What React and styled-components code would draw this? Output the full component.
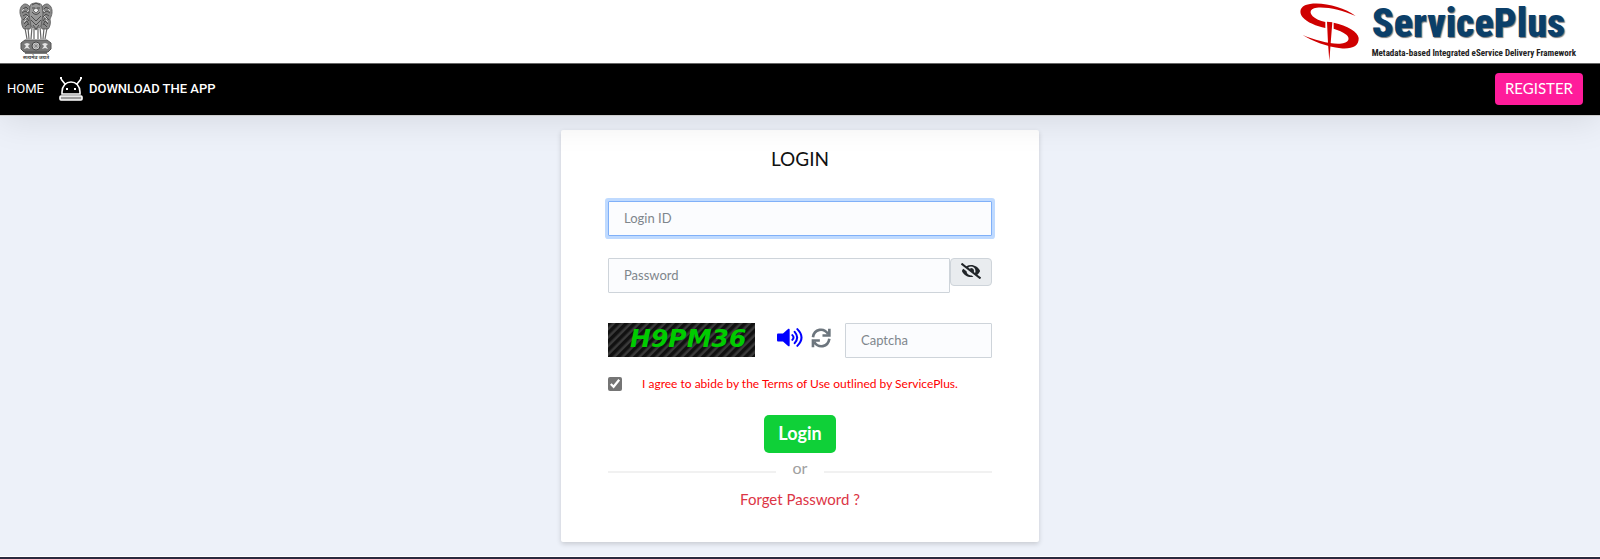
import styled, { createGlobalStyle } from "styled-components"
import { FaEyeSlash } from "react-icons/fa"

const GlobalStyle = createGlobalStyle`
  * {
    box-sizing: border-box;
  }

  body {
    margin: 0;
    background-color: #EDF1F9;
    color: #212529;
    font-family: Lato, "Open Sans", sans-serif;
    font-size: 16px;
    line-height: 24px;
  }

  button, input {
    font-family: inherit;
  }
`

const Header = styled.header`
  position: relative;
  z-index: 2;
  display: flex;
  justify-content: space-between;
  align-items: flex-start;
  height: 63px;
  padding: 2px 24px 2px 18px;
  background-color: #FFF;
`

const Brand = styled.a`
  display: flex;
  gap: 12px;
  color: #0B3F69;
  text-decoration: none;
`

const BrandName = styled.span`
  display: block;
  font-family: "Roboto Condensed", Roboto, sans-serif;
  font-size: 40px;
  font-weight: 900;
  line-height: 44px;
  text-shadow: 1px 1px 1px #777;
`

const BrandLine = styled.span`
  display: block;
  color: #222;
  font-family: "Roboto Condensed", Roboto, sans-serif;
  font-size: 9px;
  font-weight: bold;
  line-height: 14px;
`

const Nav = styled.nav`
  position: relative;
  display: flex;
  align-items: center;
  gap: 15px;
  height: 53px;
  padding: 0 17px 2px 7px;
  background-color: #000;
  border-top: 1px solid #666;
  border-bottom: 1px solid #CCC;
  box-shadow: 0 4px 36px rgba(0, 0, 0, 0.1);
`

const NavLink = styled.a`
  display: flex;
  align-items: center;
  gap: 6px;
  color: #FFF;
  font-family: Roboto, sans-serif;
  font-size: 13px;
  font-weight: ${props => props.$strong ? 500 : 400};
  text-decoration: none;
`

const Register = styled.button`
  margin-left: auto;
  height: 32px;
  padding: 0 10px 2px;
  background-color: #FF1C9B;
  color: #FFF;
  font-size: 15px;
  border: none;
  border-radius: 4px;
`

const Main = styled.main`
  padding: 14px 16px;
`

const Card = styled.form`
  max-width: 478px;
  margin: 0 auto;
  padding: 17px 47px 31px;
  background-color: #FFF;
  border-radius: 2px;
  box-shadow: 0 2px 5px rgba(0, 0, 0, 0.16);
`

const Title = styled.h1`
  margin: 0 0 30px;
  color: #111;
  font-size: 19px;
  font-weight: normal;
  line-height: 24px;
  text-align: center;
`

const Input = styled.input`
  display: block;
  flex: 1;
  width: 100%;
  min-width: 0;
  height: 35px;
  padding: 0 15px 2px;
  background-color: #FBFCFE;
  color: #495057;
  font-size: 13px;
  border: 1px solid #CED4DA;
  border-radius: 1px;

  &::placeholder {
    color: #7F868C;
  }

  &:focus {
    border-color: #80B0F8;
    outline: none;
    box-shadow: 0 0 0 3px #BFDAFF;
  }
`

const PasswordRow = styled.div`
  display: flex;
  align-items: flex-start;
  margin-top: 22px;
`

const EyeButton = styled.button`
  display: flex;
  justify-content: center;
  align-items: center;
  width: 42px;
  height: 28px;
  padding: 0 0 2px;
  background-color: #E9ECEF;
  color: #212529;
  font-size: 20px;
  border: 1px solid #CED4DA;
  border-radius: 4px;
`

const CaptchaRow = styled.div`
  display: grid;
  grid-template-columns: 147fr 90fr 147fr;
  margin-top: 30px;
`

const CaptchaImage = styled.div`
  height: 34px;
  padding-left: 22px;
  background: repeating-linear-gradient(135deg, #111 0, #111 2px, #3A3A3A 4px, #3A3A3A 5px, #111 6px);
  color: #00CC00;
  font-family: "DejaVu Sans", sans-serif;
  font-size: 25px;
  font-style: italic;
  font-weight: bold;
  line-height: 31px;
`

const CaptchaTools = styled.div`
  display: flex;
  gap: 8px;
  align-items: flex-start;
  padding: 5px 0 0 22px;
`

const IconButton = styled.button`
  display: flex;
  padding: 0;
  background: none;
  color: ${props => props.$color};
  border: none;
`

const Terms = styled.label`
  display: flex;
  align-items: center;
  gap: 20px;
  margin-top: 14px;
  color: #FF0000;
  font-size: 12px;
  line-height: 24px;
`

const Checkbox = styled.input`
  width: 14px;
  height: 14px;
  margin: 0;
  accent-color: #757575;
`

const LoginButton = styled.button`
  display: block;
  height: 38px;
  margin: 19px auto 0;
  padding: 0 14px 2px;
  background-color: #0FD038;
  color: #FFF;
  font-size: 18px;
  font-weight: bold;
  border: none;
  border-radius: 5px;
`

const Divider = styled.div`
  display: flex;
  align-items: center;
  gap: 17px;
  margin-top: 3px;
  color: #A0A0A0;

  &::before,
  &::after {
    content: "";
    flex: 1;
    height: 2px;
    margin-top: 7px;
    background-color: #F1F1F1;
  }
`

const Forget = styled.a`
  display: block;
  margin-top: 7px;
  color: #DC3545;
  font-size: 15px;
  text-align: center;
  text-decoration: none;
`

const Footer = styled.footer`
  height: 3px;
  background-color: #2B2A40;
  border-top: 1px solid #FFF;
`

function Lion({ x, y }) {
  return (
    <g transform={`translate(${x} ${y})`}>
      <path d="M1 4C-1 8 0 12 2 16C1 20 2 24 4 26L10 26C12 22 12 18 11 14C13 9 11 4 8 2C5 0 3 1 1 4Z" fill="#8a8a8a" stroke="#555" strokeWidth="0.8" />
      <path d="M3 6L6 4L8 6M2 10L5 8L9 10M3 13L6 11L9 14M3 17L6 14L9 18M4 21L7 18L9 22M5 24L8 21" fill="none" stroke="#444" strokeWidth="0.9" />
      <path d="M2 8L4 6M5 16L8 13M4 19L6 17M7 9L9 7" stroke="#e5e5e5" strokeWidth="0.8" />
    </g>
  )
}

function Emblem() {
  return (
    <svg width="36" height="58" viewBox="0 0 34 58" role="img" aria-label="National emblem">
      <Lion x="1" y="1" />
      <g transform="translate(34 0) scale(-1 1)">
        <Lion x="1" y="1" />
      </g>
      <path d="M11 4C11 0 23 0 23 4L24 12L22 24L17 28L12 24L10 12Z" fill="#999" stroke="#555" strokeWidth="0.8" />
      <path d="M13 3L17 1L21 3M13 6H16M18 6H21M13 10Q17 15 21 10M12 14L17 19L22 14M12 18L17 23L22 18M14 23L17 27L20 23" fill="none" stroke="#444" strokeWidth="0.9" />
      <path d="M14 8L17 6L20 8L17 11Z" fill="#eee" stroke="#333" strokeWidth="0.6" />
      <path d="M6 26L8 37M9 26L10 37M13 25L12 37M15 27L15 37M19 27L19 37M21 25L22 37M25 26L24 37M28 26L26 37" stroke="#666" strokeWidth="1.2" />
      <path d="M6 38H28L32 41V47L29 50H5L2 47V41Z" fill="#777" stroke="#555" />
      <path d="M5 42L8 41L11 42L9 44L11 47L8 46L5 47L7 44ZM29 42L26 41L23 42L25 44L23 47L26 46L29 47L27 44Z" fill="#e4e4e4" />
      <circle cx="17" cy="44" r="4" fill="#ccc" stroke="#444" />
      <path d="M17 40V48M13 44H21M14 41L20 47M20 41L14 47" stroke="#777" strokeWidth="0.6" />
      <path d="M6 51H28" stroke="#444" strokeWidth="1.4" />
      <text x="17" y="57" fill="#444" fontFamily="Noto Sans, sans-serif" fontSize="5" fontWeight="bold" textAnchor="middle">सत्यमेव जयते</text>
    </svg>
  )
}

function Mark() {
  return (
    <svg width="60" height="59" viewBox="58 4 180 177" aria-hidden="true">
      <g fill="#CF0000">
        <path d="M225 46C190 20 130 4 88 10C58 14 53 34 66 50C78 65 108 77 134 82V64C118 61 104 55 96 47C84 34 90 23 108 21C140 18 185 28 225 46Z" />
        <path d="M139 63L155 65L150 128L146 181L142 128Z" />
        <path d="M159 66C200 75 232 93 234 112C235 136 215 146 180 143C140 139 95 121 66 103C100 118 150 131 178 129C206 127 209 112 197 102C188 94 172 88 159 84Z" />
      </g>
    </svg>
  )
}

function Android() {
  return (
    <svg width="24" height="24" viewBox="0 0 24 24" fill="none" stroke="#FFF" aria-hidden="true">
      <path d="M3 17V15C3 9 7 5 12 5S21 9 21 15V17ZM6 7L2 2M18 7L22 2" strokeWidth="1.6" />
      <rect x="1" y="19" width="22" height="4" rx="1" fill="#999" strokeWidth="1.6" />
      <path d="M7 12H9M15 12H17" strokeWidth="2" />
      <path d="M1 1H3M21 1H23" strokeWidth="2" />
    </svg>
  )
}

function Speaker() {
  return (
    <svg width="26" height="19" viewBox="0 0 78 56" fill="none" stroke="currentColor" strokeLinecap="round" aria-hidden="true">
      <path d="M3 16H18L34 2Q38 0 38 5V51Q38 56 34 54L18 40H3Q0 40 0 36V20Q0 16 3 16Z" fill="currentColor" stroke="none" />
      <path d="M46 21Q53 28 46 35M53 11Q68 28 53 45M61 3Q86 28 61 53" strokeWidth="6" />
    </svg>
  )
}

function Refresh() {
  return (
    <svg width="20" height="20" viewBox="124 83 61 59" fill="none" stroke="currentColor" strokeWidth="8" aria-hidden="true">
      <path d="M130 110C134 84 163 80 176 100M180 84V105H159" />
      <path d="M180 115C176 141 147 145 134 125M130 141V120H151" />
    </svg>
  )
}

export default function App() {
  return (
    <>
      <GlobalStyle />
      <Header>
        <Emblem />
        <Brand href="#">
          <Mark />
          <span>
            <BrandName>ServicePlus</BrandName>
            <BrandLine>Metadata-based Integrated eService Delivery Framework</BrandLine>
          </span>
        </Brand>
      </Header>
      <Nav>
        <NavLink href="#">HOME</NavLink>
        <NavLink href="#" $strong>
          <Android />
          DOWNLOAD THE APP
        </NavLink>
        <Register type="button">REGISTER</Register>
      </Nav>
      <Main>
        <Card onSubmit={event => event.preventDefault()}>
          <Title>LOGIN</Title>
          <Input type="text" placeholder="Login ID" aria-label="Login ID" autoFocus />
          <PasswordRow>
            <Input type="password" placeholder="Password" aria-label="Password" />
            <EyeButton type="button" aria-label="Show password">
              <FaEyeSlash />
            </EyeButton>
          </PasswordRow>
          <CaptchaRow>
            <CaptchaImage>H9PM36</CaptchaImage>
            <CaptchaTools>
              <IconButton type="button" $color="#0000FF" aria-label="Play captcha">
                <Speaker />
              </IconButton>
              <IconButton type="button" $color="#6C757D" aria-label="Refresh captcha">
                <Refresh />
              </IconButton>
            </CaptchaTools>
            <Input type="text" placeholder="Captcha" aria-label="Captcha" />
          </CaptchaRow>
          <Terms>
            <Checkbox type="checkbox" defaultChecked />
            I agree to abide by the Terms of Use outlined by ServicePlus.
          </Terms>
          <LoginButton type="submit">Login</LoginButton>
          <Divider>or</Divider>
          <Forget href="#">Forget Password ?</Forget>
        </Card>
      </Main>
      <Footer />
    </>
  )
}
